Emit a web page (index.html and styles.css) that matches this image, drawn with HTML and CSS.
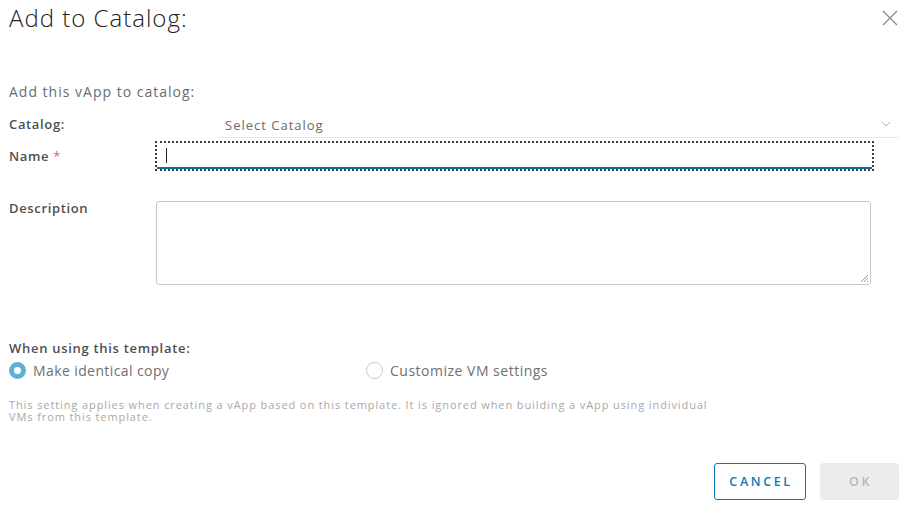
FILE: index.html
```html
<!DOCTYPE html>
<html>
<head>
<meta charset="utf-8">
<link rel="stylesheet" href="styles.css">
</head>
<body>
<div class="modal">
  <div class="modal-header">
    <h3 class="modal-title">Add to Catalog:</h3>
    <button class="close" aria-label="Close">
      <svg width="16" height="16" viewBox="0 0 16 16"><path d="M1 1 L15 15 M15 1 L1 15" stroke="#8c8c8c" stroke-width="1.3" fill="none"/></svg>
    </button>
  </div>
  <div class="modal-body">
    <p class="intro">Add this vApp to catalog:</p>
    <div class="row row-catalog">
      <label class="label">Catalog:</label>
      <div class="select">
        <span class="select-text">Select Catalog</span>
        <svg class="chevron" width="10" height="6" viewBox="0 0 10 6"><path d="M1 1 L5 5 L9 1" stroke="#b3b3b3" stroke-width="1" fill="none"/></svg>
      </div>
    </div>
    <div class="row row-name">
      <label class="label">Name <span class="req">*</span></label>
      <div class="input-focus"><div class="input"><span class="caret"></span></div></div>
    </div>
    <div class="row row-desc">
      <label class="label">Description</label>
      <div class="textarea">
        <svg class="grip" width="10" height="10" viewBox="0 0 10 10"><path d="M9 2 L2 9 M9 5 L5 9 M9 8 L8 9" stroke="#9a9a9a" stroke-width="1" fill="none"/></svg>
      </div>
    </div>
    <div class="template">
      <div class="label">When using this template:</div>
      <div class="radios">
        <div class="radio radio-on"><span class="dot"></span><span>Make identical copy</span></div>
        <div class="radio radio-b"><span class="dot"></span><span>Customize VM settings</span></div>
      </div>
      <p class="help">This setting applies when creating a vApp based on this template. It is ignored when building a vApp using individual VMs from this template.</p>
    </div>
  </div>
  <div class="modal-footer">
    <button class="btn btn-outline">CANCEL</button>
    <button class="btn btn-disabled">OK</button>
  </div>
</div>
</body>
</html>
```
FILE: styles.css
```css
* { box-sizing: border-box; }
html, body { margin: 0; padding: 0; background: #fff; }
body {
  font-family: "Open Sans", "Lato", sans-serif;
  color: #565656;
  width: 902px;
  height: 505px;
  overflow: hidden;
}
.modal { padding: 0 3px 0 9px; }
.modal-header {
  display: flex;
  justify-content: space-between;
  align-items: flex-start;
  height: 74px;
}
.modal-title {
  margin: 3px 0 0 0;
  font-size: 24px;
  font-weight: 300;
  color: #222;
  line-height: 30px;
  letter-spacing: 1px;
}
.close {
  border: 0;
  background: none;
  padding: 0;
  margin: 10px 1px 0 0;
  width: 16px;
  height: 16px;
}
.close svg { display: block; }
.intro {
  margin: 9px 0 0 0;
  font-size: 14px;
  line-height: 18px;
  color: #6b6b6b;
  letter-spacing: 1px;
}
.row { display: flex; }
.label {
  font-size: 13px;
  font-weight: 600;
  color: #4f4f4f;
  width: 146px;
  flex: none;
  letter-spacing: 0.65px;
}
.req { color: #e0625b; font-weight: 400; }
.row-catalog { margin-top: 6px; align-items: flex-start; }
.row-catalog .label { line-height: 26px; padding-top: 4px; }
.select {
  margin-left: 64px;
  flex: 1;
  height: 31px;
  border-bottom: 1px solid #e6e6e6;
  display: flex;
  align-items: center;
  justify-content: space-between;
  padding: 5px 8px 0 6px;
}
.select-text { font-size: 13px; color: #6a6a6a; letter-spacing: 1px; }
.chevron { margin-top: -2px; }
.row-name { margin-top: 3px; align-items: center; }
.row-name .label { line-height: 29px; }
.input-focus {
  width: 719px;
  height: 30px;
  outline: 2px dotted #3c3c3c;
  outline-offset: -2px;
  padding: 2px;
}
.input {
  height: 26px;
  border-bottom: 2px solid #0d6f9c;
  display: flex;
  align-items: center;
  padding-left: 9px;
}
.caret { width: 1px; height: 15px; background: #222; }
.row-desc { margin-top: 30px; align-items: flex-start; }
.row-desc .label { padding-top: 0; line-height: 14px; }
.textarea {
  margin-left: 1px;
  width: 715px;
  height: 84px;
  border: 1px solid #c8c8c8;
  border-radius: 3px;
  position: relative;
}
.grip { position: absolute; right: 1px; bottom: 1px; }
.template { margin-top: 56px; }
.template .label { width: auto; line-height: 14px; letter-spacing: 0.7px; }
.radios { display: flex; margin-top: 6px; }
.radio {
  display: flex;
  align-items: center;
  font-size: 14px;
  color: #707070;
  width: 357px;
  letter-spacing: 0.4px;
}
.radio-b { letter-spacing: 0.5px; }
.dot {
  width: 17px;
  height: 17px;
  border-radius: 50%;
  border: 1px solid #c8c8c8;
  margin-right: 7px;
  flex: none;
}
.radio-on .dot { border: 5px solid #62afd4; background: #fff; }
.help {
  margin: 19px 0 0 0;
  font-size: 11px;
  line-height: 12px;
  color: #a8a8a8;
  width: 722px;
  letter-spacing: 0.9px;
}
.modal-footer {
  display: flex;
  justify-content: flex-end;
  gap: 14px;
  margin-top: 40px;
}
.btn {
  height: 37px;
  border-radius: 3px;
  font-family: "Open Sans", sans-serif;
  font-size: 12.5px;
  font-weight: 600;
  letter-spacing: 2.6px;
  padding: 0 0 0 2px;
}
.btn-outline {
  width: 92px;
  background: #fff;
  border: 1px solid #0e79b2;
  color: #0e79b2;
}
.btn-disabled {
  width: 79px;
  background: #ececec;
  border: 1px solid #ececec;
  color: #b8b8b8;
}
```
